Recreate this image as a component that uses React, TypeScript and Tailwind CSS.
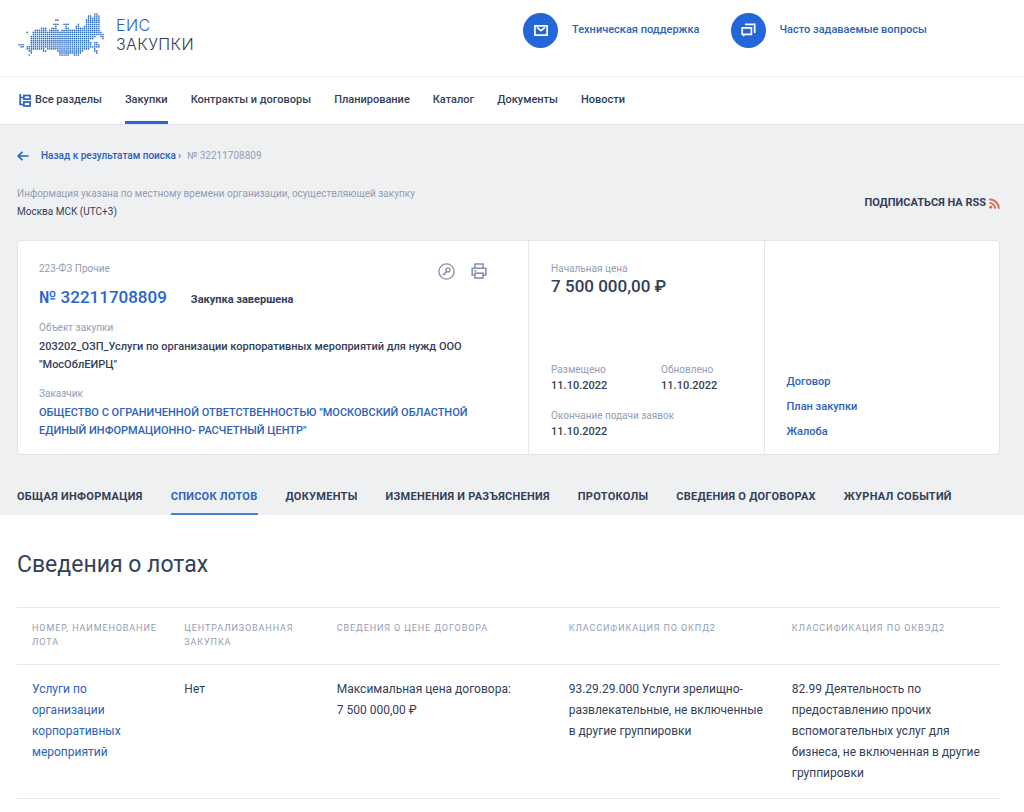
import React from "react";

const MAP_ROWS: [number, number][][] = [
  [[37, 38]],
  [[34, 35], [37, 39]],
  [[34, 39]],
  [[18, 19], [33, 39]],
  [[33, 39]],
  [[17, 19], [22, 24], [29, 29], [33, 39]],
  [[18, 18], [23, 23], [28, 29], [32, 39]],
  [[11, 13], [16, 18], [23, 24], [28, 39]],
  [[8, 13], [15, 19], [21, 39]],
  [[4, 4], [7, 40]],
  [[7, 41]],
  [[6, 37], [40, 41]],
  [[6, 36], [41, 41]],
  [[6, 34]],
  [[6, 35], [37, 38]],
  [[0, 2], [6, 35], [37, 39]],
  [[1, 2], [4, 39]],
  [[4, 12], [14, 34], [37, 37]],
  [[5, 6], [12, 13], [19, 31], [37, 38]],
  [[6, 6], [20, 30], [38, 38]],
  [[5, 5], [20, 24], [27, 29]],
];

function RussiaMap() {
  const dots: React.ReactNode[] = [];
  MAP_ROWS.forEach((row, y) =>
    row.forEach(([from, to]) => {
      for (let x = from; x <= to; x++) {
        dots.push(<circle key={`${x}-${y}`} cx={x + 0.5} cy={y + 0.5} r={0.41} />);
      }
    }),
  );
  return (
    <svg viewBox="0 0 42 21" className="h-[43px] w-[86px] fill-[#2f6cc0]" aria-hidden="true">
      {dots}
    </svg>
  );
}

function MailIcon() {
  return (
    <svg viewBox="0 0 14 11" className="h-[11px] w-[14px] fill-none stroke-white" strokeWidth="1.7" aria-hidden="true">
      <rect x="0.9" y="0.9" width="12.2" height="9.2" />
      <path d="M3 2.4 7 5.6l4-3.2" />
    </svg>
  );
}

function ChatIcon() {
  return (
    <svg viewBox="0 0 15 15" className="h-[15px] w-[15px] fill-none stroke-white" strokeWidth="1.7" aria-hidden="true">
      <path d="M4 1.3h9.7v8.7" />
      <path d="M1.2 4.8h9.2v6.6H1.2z" />
      <path d="M2 11.4h2.6L2.6 14z" className="fill-white stroke-none" />
    </svg>
  );
}

function TreeIcon() {
  return (
    <svg viewBox="0 0 12 13" className="h-[13px] w-[12px] fill-none stroke-[#2d62b8]" strokeWidth="1.7" aria-hidden="true">
      <path d="M1.2 0v10.5H4M1.2 3.5H4" />
      <rect x="4.9" y="1.5" width="6.2" height="3.6" />
      <rect x="4.9" y="8" width="6.2" height="4" />
    </svg>
  );
}

function ArrowLeftIcon() {
  return (
    <svg viewBox="0 0 12 10" className="h-[10px] w-[12px] fill-none stroke-[#2565cf]" strokeWidth="1.7" aria-hidden="true">
      <path d="M11.5 5H1.3M5.4 0.8 1.2 5l4.2 4.2" />
    </svg>
  );
}

function RssIcon() {
  return (
    <svg viewBox="0 0 12 12" className="h-[11px] w-[11px] fill-none stroke-[#dd6650]" strokeWidth="2.1" aria-hidden="true">
      <circle cx="1.9" cy="10.1" r="1.6" className="fill-[#dd6650] stroke-none" />
      <path d="M0.4 5.3a6.3 6.3 0 0 1 6.3 6.4M0.4 1.3a10.3 10.3 0 0 1 10.3 10.4" />
    </svg>
  );
}

function KeyIcon() {
  return (
    <svg viewBox="0 0 17 17" className="h-[17px] w-[17px] fill-none stroke-[#8592ab]" strokeWidth="1.4" aria-hidden="true">
      <circle cx="8.5" cy="8.5" r="7.6" />
      <circle cx="10" cy="6.9" r="2" />
      <path d="M8.6 8.4 5 11.9M6.2 10.6l1.1 1.1" />
    </svg>
  );
}

function PrintIcon() {
  return (
    <svg viewBox="0 0 16 16" className="h-[16px] w-[16px] fill-none stroke-[#8592ab]" strokeWidth="1.6" aria-hidden="true">
      <path d="M4 5V1h8v4M4 12H1.2V5.2h13.6V12H12" />
      <rect x="4" y="10.2" width="8" height="4.8" />
      <path d="M3.4 7.8h2" />
    </svg>
  );
}

const NAV = ["Закупки", "Контракты и договоры", "Планирование", "Каталог", "Документы", "Новости"];

const TABS = [
  "Общая информация",
  "Список лотов",
  "Документы",
  "Изменения и разъяснения",
  "Протоколы",
  "Сведения о договорах",
  "Журнал событий",
];

function Field({ label, value }: { label: string; value: string }) {
  return (
    <div>
      <dt className="text-[10px] leading-4 text-[#929db3]">{label}</dt>
      <dd className="text-[11px] font-medium leading-4">{value}</dd>
    </div>
  );
}

export default function App() {
  return (
    <div className="min-h-screen bg-white font-['Roboto',sans-serif] text-[11px] text-[#334059]">
      <header className="font-medium">
        <div className="flex h-[77px] items-start border-b border-[#eceef2] pl-[18px] pr-6 pt-[13px]">
          <a href="#" className="flex w-[505px] items-start gap-3">
            <RussiaMap />
            <span className="flex flex-col pt-[3px] font-['Inter',sans-serif] text-[16px] font-light leading-[19px] tracking-wide">
              <span className="text-[#2d62b8]">ЕИС</span>
              <span>ЗАКУПКИ</span>
            </span>
          </a>
          <div className="flex gap-[31px]">
            <a href="#" className="flex gap-[14px] text-[#2d62b8]">
              <span className="flex size-[35px] items-center justify-center rounded-full bg-[#2465d8]">
                <MailIcon />
              </span>
              <span className="leading-[33px]">Техническая поддержка</span>
            </a>
            <a href="#" className="flex gap-[14px] text-[#2d62b8]">
              <span className="flex size-[35px] items-center justify-center rounded-full bg-[#2465d8]">
                <ChatIcon />
              </span>
              <span className="leading-[33px]">Часто задаваемые вопросы</span>
            </a>
          </div>
        </div>
        <nav className="flex h-12 gap-[23px] border-b border-[#e0e5ee] pl-[19px] leading-[46px]">
          <a href="#" className="flex items-start gap-1">
            <span className="flex h-[46px] items-center">
              <TreeIcon />
            </span>
            <span>Все разделы</span>
          </a>
          {NAV.map((item, i) => (
            <a key={item} href="#" className={i === 0 ? "border-b-[3px] border-[#2d66c4]" : ""}>
              {item}
            </a>
          ))}
        </nav>
      </header>

      <section className="bg-[#eff0f2] pl-[17px] pr-6">
        <div className="flex items-center pt-[23px] text-[10px] leading-4">
          <ArrowLeftIcon />
          <a href="#" className="ml-3 font-medium text-[#2d62b8]">Назад к результатам поиска</a>
          <span className="ml-[2px] text-[#2d62b8]">›</span>
          <span className="ml-[6px] text-[#929db3]">№ 32211708809</span>
        </div>

        <div className="flex items-start justify-between pt-[21px] text-[10px]">
          <div className="leading-[18px]">
            <p className="text-[#929db3]">Информация указана по местному времени организации, осуществляющей закупку</p>
            <p>Москва МСК (UTC+3)</p>
          </div>
          <a href="#" className="mt-[10px] flex items-center gap-[3px] text-[11px] font-bold uppercase leading-4">
            Подписаться на RSS
            <RssIcon />
          </a>
        </div>

        <div className="mt-[19px] grid grid-cols-[52fr_24fr_24fr] rounded-sm border border-[#e1e4e9] bg-white">
          <div className="px-[21px] pb-[14px] pt-5">
            <div className="flex items-start justify-between">
              <p className="text-[10px] leading-4 text-[#929db3]">223-ФЗ Прочие</p>
              <div className="mr-5 flex h-5 items-center gap-4">
                <button type="button" aria-label="Электронная подпись">
                  <KeyIcon />
                </button>
                <button type="button" aria-label="Печать">
                  <PrintIcon />
                </button>
              </div>
            </div>
            <div className="flex items-baseline gap-6">
              <a href="#" className="text-[17px] font-medium leading-8 text-[#2565cf]">№ 32211708809</a>
              <span className="text-[11px] font-bold">Закупка завершена</span>
            </div>
            <dl className="mr-6">
              <dt className="mt-[7px] text-[10px] leading-4 text-[#929db3]">Объект закупки</dt>
              <dd className="pt-[2px] font-medium leading-[18px]">
                203202_ОЗП_Услуги по организации корпоративных мероприятий для нужд ООО "МосОблЕИРЦ"
              </dd>
              <dt className="mt-[12px] text-[10px] leading-4 text-[#929db3]">Заказчик</dt>
              <dd className="pt-[2px] font-medium leading-[18px]">
                <a href="#" className="text-[#2d62b8]">
                  ОБЩЕСТВО С ОГРАНИЧЕННОЙ ОТВЕТСТВЕННОСТЬЮ "МОСКОВСКИЙ ОБЛАСТНОЙ ЕДИНЫЙ ИНФОРМАЦИОННО- РАСЧЕТНЫЙ ЦЕНТР"
                </a>
              </dd>
            </dl>
          </div>
          <div className="flex flex-col justify-between border-l border-[#e5e8ee] px-[22px] pb-[14px] pt-5">
            <div>
              <p className="text-[10px] leading-4 text-[#929db3]">Начальная цена</p>
              <p className="text-[17px] font-medium leading-[18px]">7 500 000,00 ₽</p>
            </div>
            <dl className="grid grid-cols-[110px_1fr] gap-y-[14px]">
              <Field label="Размещено" value="11.10.2022" />
              <Field label="Обновлено" value="11.10.2022" />
              <div className="col-span-2">
                <Field label="Окончание подачи заявок" value="11.10.2022" />
              </div>
            </dl>
          </div>
          <div className="flex flex-col justify-end gap-[9px] border-l border-[#e5e8ee] px-[22px] pb-[14px] font-medium leading-4 text-[#2d62b8]">
            <a href="#">Договор</a>
            <a href="#">План закупки</a>
            <a href="#">Жалоба</a>
          </div>
        </div>

        <nav className="mt-[25px] flex gap-7 whitespace-nowrap text-[11px] font-bold uppercase leading-[33px] tracking-wide">
          {TABS.map((tab, i) => (
            <a
              key={tab}
              href="#"
              className={i === 1 ? "border-b-2 border-[#4585cf] text-[#2d66c4]" : "border-b-2 border-transparent"}
            >
              {tab}
            </a>
          ))}
        </nav>
      </section>

      <main className="pl-[17px] pr-6">
        <h1 className="pt-[34px] text-[23px] leading-8">Сведения о лотах</h1>
        <table className="mt-[26px] w-full table-fixed border-y border-[#e5e8ee] text-left align-top">
          <colgroup>
            <col className="w-[15.5%]" />
            <col className="w-[15.5%]" />
            <col className="w-[23.6%]" />
            <col className="w-[22.7%]" />
            <col className="w-[22.7%]" />
          </colgroup>
          <thead>
            <tr className="border-b border-[#e5e8ee] align-top text-[9px] uppercase leading-[14px] tracking-widest text-[#929db3]">
              <th className="pb-[15px] pl-[15px] pt-[13px] font-normal">Номер, наименование лота</th>
              <th className="pl-[15px] pt-[13px] font-normal">Централизованная закупка</th>
              <th className="pl-[15px] pt-[13px] font-normal">Сведения о цене договора</th>
              <th className="pl-[15px] pt-[13px] font-normal">Классификация по ОКПД2</th>
              <th className="pl-[15px] pt-[13px] font-normal">Классификация по ОКВЭД2</th>
            </tr>
          </thead>
          <tbody>
            <tr className="align-top text-[12px] leading-[21px]">
              <td className="pb-[14px] pl-[15px] pr-6 pt-[14px]">
                <a href="#" className="text-[#2d62b8]">Услуги по организации корпоративных мероприятий</a>
              </td>
              <td className="pl-[15px] pt-[14px]">Нет</td>
              <td className="pl-[15px] pt-[14px]">
                Максимальная цена договора:
                <br />7 500 000,00 ₽
              </td>
              <td className="pl-[15px] pr-2 pt-[14px]">
                93.29.29.000 Услуги зрелищно-развлекательные, не включенные в другие группировки
              </td>
              <td className="pb-[14px] pl-[15px] pr-3 pt-[14px]">
                82.99 Деятельность по предоставлению прочих вспомогательных услуг для бизнеса, не включенная в другие
                группировки
              </td>
            </tr>
          </tbody>
        </table>
      </main>
    </div>
  );
}
